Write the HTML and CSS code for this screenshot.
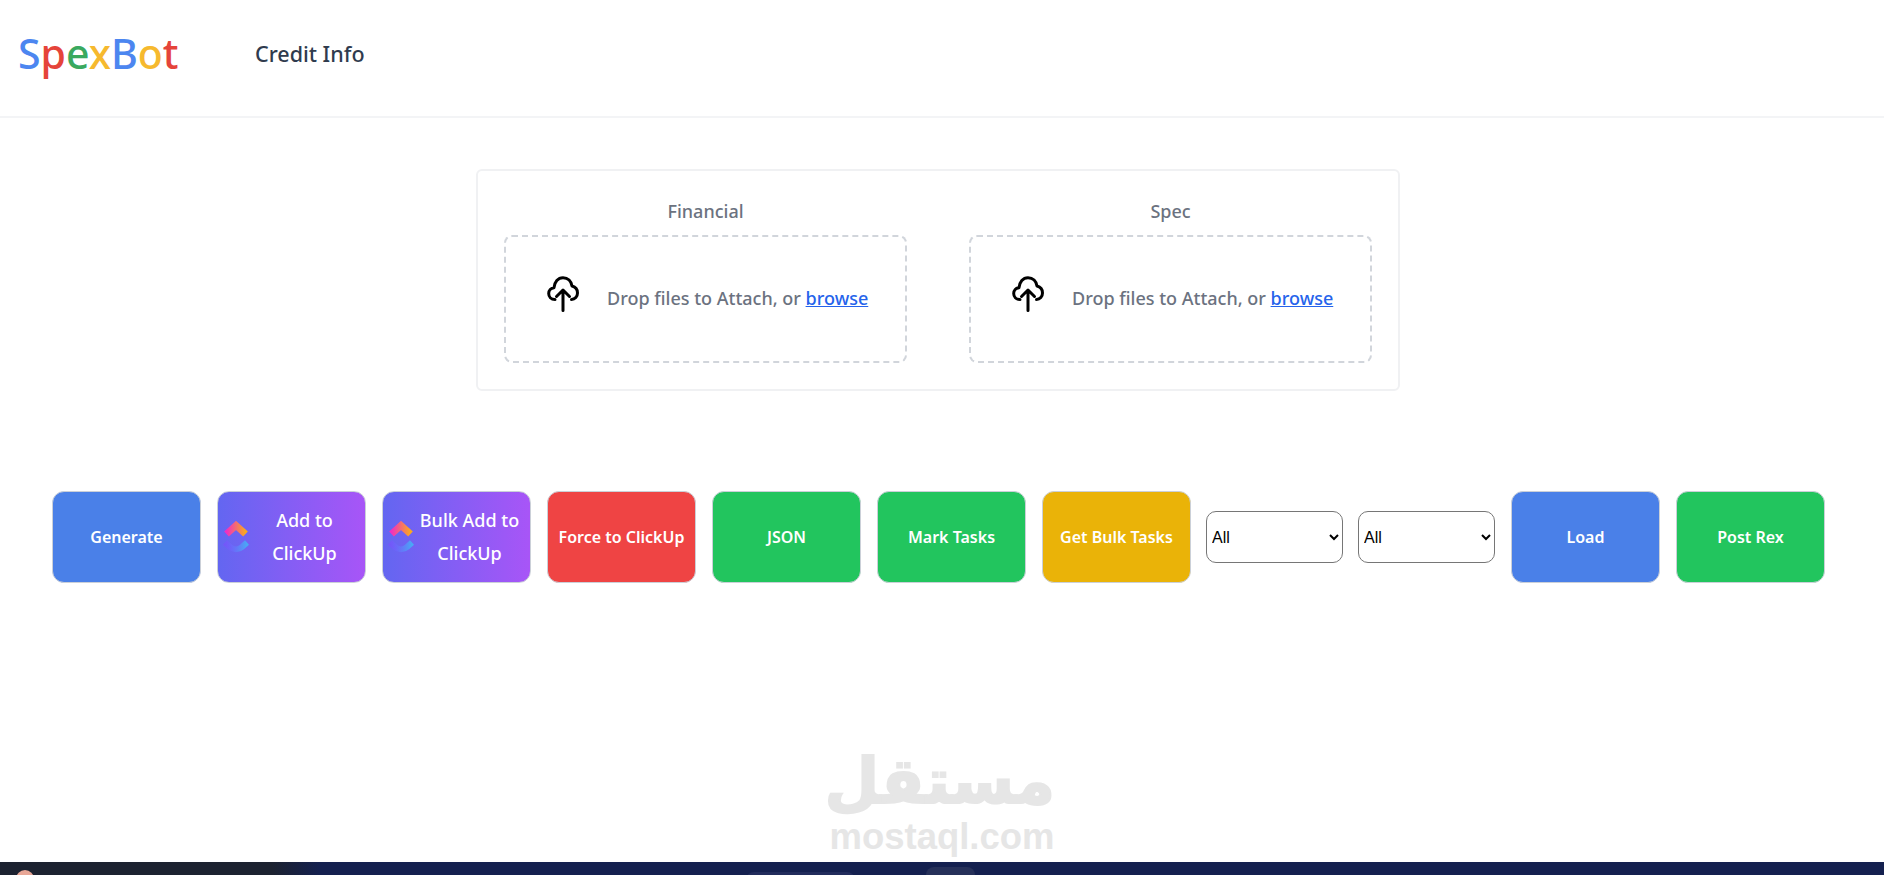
FILE: index.html
```html
<!DOCTYPE html>
<html lang="en">
<head>
<meta charset="utf-8">
<title>SpexBot</title>
<link rel="stylesheet" href="styles.css">
</head>
<body>
<header class="topbar">
  <a class="logo"><span class="c-blue">S</span><span class="c-red">p</span><span class="c-green">e</span><span class="c-yellow">x</span><span class="c-blue">B</span><span class="c-yellow">o</span><span class="c-red">t</span></a>
  <nav class="nav"><a class="nav-link">Credit Info</a></nav>
</header>
<main class="main">
  <section class="card">
    <div class="upload">
      <div class="upload-label">Financial</div>
      <div class="drop">
        <svg class="cloud" viewBox="0 0 32 36" fill="none" stroke="#000" stroke-width="3" stroke-linecap="round" stroke-linejoin="round"><path d="M8 23.5C4 23.5 1.7 20.6 1.7 17.5C1.7 14.3 4 12 7 11.7C7.5 6 11 1.7 16 1.7C21 1.7 24.3 5.5 25 10C28.3 10.8 30.5 13.5 30.5 17C30.5 20.5 28 23.5 24.5 23.5"/><path d="M16 34.5V14.5M9.5 20.5L16 14L22.5 20.5"/></svg>
        <p class="drop-text">Drop files to Attach, or <a class="browse">browse</a></p>
      </div>
    </div>
    <div class="upload">
      <div class="upload-label">Spec</div>
      <div class="drop">
        <svg class="cloud" viewBox="0 0 32 36" fill="none" stroke="#000" stroke-width="3" stroke-linecap="round" stroke-linejoin="round"><path d="M8 23.5C4 23.5 1.7 20.6 1.7 17.5C1.7 14.3 4 12 7 11.7C7.5 6 11 1.7 16 1.7C21 1.7 24.3 5.5 25 10C28.3 10.8 30.5 13.5 30.5 17C30.5 20.5 28 23.5 24.5 23.5"/><path d="M16 34.5V14.5M9.5 20.5L16 14L22.5 20.5"/></svg>
        <p class="drop-text">Drop files to Attach, or <a class="browse">browse</a></p>
      </div>
    </div>
  </section>
  <section class="actions">
    <button class="btn blue">Generate</button>
    <button class="btn purple">
      <svg class="cu" viewBox="0 0 26 32"><defs><linearGradient id="cua" x1="0" y1="0" x2="1" y2="0"><stop offset="0" stop-color="#f02fc2"/><stop offset="1" stop-color="#f9a91f"/></linearGradient><linearGradient id="cub" x1="0" y1="0" x2="1" y2="0"><stop offset="0" stop-color="#7c4dff" stop-opacity=".55"/><stop offset="1" stop-color="#49a8f5"/></linearGradient></defs><path d="M3.5 13L13 4.500L22.500 13" fill="none" stroke="url(#cua)" stroke-width="7"/><path d="M2 21.500L7 26C10.500 29 15.500 29 19 26L24 21.500" fill="none" stroke="url(#cub)" stroke-width="6"/></svg>
      <span class="btn-text two-line">Add to ClickUp</span>
    </button>
    <button class="btn purple">
      <svg class="cu" viewBox="0 0 26 32"><path d="M3.5 13L13 4.500L22.500 13" fill="none" stroke="url(#cua)" stroke-width="7"/><path d="M2 21.500L7 26C10.500 29 15.500 29 19 26L24 21.500" fill="none" stroke="url(#cub)" stroke-width="6"/></svg>
      <span class="btn-text two-line">Bulk Add to ClickUp</span>
    </button>
    <button class="btn red">Force to ClickUp</button>
    <button class="btn green">JSON</button>
    <button class="btn green">Mark Tasks</button>
    <button class="btn yellow">Get Bulk Tasks</button>
    <select class="sel"><option>All</option></select>
    <select class="sel"><option>All</option></select>
    <button class="btn blue">Load</button>
    <button class="btn green">Post Rex</button>
  </section>
</main>
<div class="watermark">
  <div class="wm-ar" lang="ar" dir="rtl">مستقل</div>
  <div class="wm-en">mostaql.com</div>
</div>
<footer class="taskbar">
  <div class="tb-left"><span class="avatar"></span></div>
  <div class="tb-right"><span class="tb-pill wide"></span><span class="tb-pill narrow"></span></div>
</footer>
</body>
</html>
```
FILE: styles.css
```css
* { box-sizing: border-box; }
html, body { height: 100%; margin: 0; }
body {
  display: flex;
  flex-direction: column;
  background: #fff;
  font-family: "Noto Sans", "Open Sans", sans-serif;
  overflow: hidden;
}
.topbar {
  height: 118px;
  flex: none;
  display: flex;
  align-items: center;
  padding: 0 0 9px 18px;
  border-bottom: 2px solid #f3f4f6;
}
.logo { font-size: 41px; line-height: 1; font-weight: 500; width: 237px; }
.c-blue { color: #4c86f0; }
.c-red { color: #e5443a; }
.c-green { color: #3aa95f; }
.c-yellow { color: #f6b92e; }
.nav-link { font-size: 21.5px; font-weight: 500; color: #2f3b4e; }
.main { flex: 1; display: flex; flex-direction: column; align-items: center; min-height: 0; padding-right: 8px; }
.card {
  margin-top: 51px;
  width: 924px;
  height: 222px;
  padding: 26px;
  display: flex;
  justify-content: space-between;
  border: 2px solid #f0f1f3;
  border-radius: 6px;
}
.upload { width: 403px; }
.upload-label {
  height: 38px;
  text-align: center;
  font-size: 18px;
  line-height: 28px;
  font-weight: 500;
  color: #6b7280;
}
.drop {
  height: 128px;
  display: flex;
  align-items: center;
  padding: 0 0 0 41px;
  border: 2px dashed #d1d5db;
  border-radius: 8px;
}
.cloud { width: 32px; height: 36px; flex: none; margin-top: -10px; }
.drop-text { margin: -2px 0 0 28px; font-size: 18px; font-weight: 500; color: #6b7280; white-space: nowrap; }
.browse { color: #2563eb; text-decoration: underline; }
.actions {
  margin-top: 100px;
  width: 1772px;
  display: flex;
  align-items: center;
  gap: 16px;
}
.btn {
  width: 149px;
  height: 92px;
  flex: none;
  display: flex;
  align-items: center;
  justify-content: center;
  padding: 0 6px;
  border: 1px solid #cbd0d8;
  border-radius: 12px;
  color: #fff;
  font-family: inherit;
  font-size: 16px;
  font-weight: 600;
  line-height: 33px;
}
.blue { background: #4a80e8; }
.purple { background: linear-gradient(90deg, #6366f1, #a855f7); padding: 0 5px; }
.red { background: #ef4444; padding: 0; }
.green { background: #22c55e; }
.yellow { background: #eab308; padding: 0; }
.cu { width: 26px; height: 32px; flex: none; }
.btn-text { flex: 1; }
.two-line { font-size: 18px; font-weight: 500; }
.sel {
  width: 137px;
  height: 52px;
  flex: none;
  margin-left: -1px;
  padding: 0 0 0 1px;
  background: #fff;
  border: 1px solid #767676;
  border-radius: 10px;
  color: #000;
  font-family: "Liberation Sans", Arial, sans-serif;
  font-size: 16px;
}
.watermark {
  position: absolute;
  left: 829px;
  top: 745px;
  width: 226px;
  text-align: center;
  color: #e6e6e6;
  pointer-events: none;
}
.wm-ar {
  font-family: "DejaVu Sans", sans-serif;
  font-weight: 700;
  font-size: 63px;
  line-height: 74px;
  height: 74px;
  padding-left: 4px;
  -webkit-text-stroke: 2px #e6e6e6;
}
.wm-en {
  font-family: "Liberation Sans", Arial, sans-serif;
  font-weight: 700;
  font-size: 36.5px;
  line-height: 36px;
  white-space: nowrap;
}
.taskbar { height: 13px; flex: none; display: flex; overflow: hidden; }
.tb-left { width: 320px; background: linear-gradient(90deg, #1c2230 85%, #14204f); padding: 8px 0 0 16px; }
.avatar { display: block; width: 18px; height: 18px; border-radius: 50%; background: #e8a797; }
.tb-right { flex: 1; display: flex; background: #14204f; padding-left: 426px; }
.tb-pill { display: block; height: 20px; border-radius: 8px; }
.wide { width: 109px; margin-top: 10px; background: #222c5c; }
.narrow { width: 49px; margin: 5px 0 0 71px; background: #263059; }
```
